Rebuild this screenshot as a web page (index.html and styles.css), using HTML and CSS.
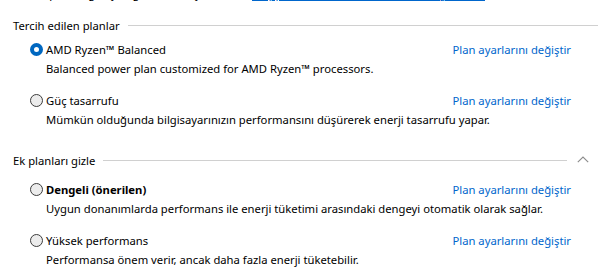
FILE: index.html
```html
<!DOCTYPE html>
<html lang="tr">
<head>
    <meta charset="UTF-8">
    <title>Güç Seçenekleri</title>
    <link rel="stylesheet" href="styles.css">
</head>
<body>
    <div class="page">
        <p class="intro">(ekran parlaklığı, uyku gibi) koleksiyonudur. <a href="#" class="more">Güç planları hakkında daha fazla bilgi edinin</a></p>

        <div class="group">
            <div class="head">
                <span class="title">Tercih edilen planlar</span>
                <span class="rule"></span>
            </div>
            <div class="plan">
                <div class="row">
                    <span class="radio on"></span>
                    <span class="name">AMD Ryzen™ Balanced</span>
                    <a href="#" class="link">Plan ayarlarını değiştir</a>
                </div>
                <div class="desc">Balanced power plan customized for AMD Ryzen™ processors.</div>
            </div>
            <div class="plan">
                <div class="row">
                    <span class="radio"></span>
                    <span class="name">Güç tasarrufu</span>
                    <a href="#" class="link">Plan ayarlarını değiştir</a>
                </div>
                <div class="desc">Mümkün olduğunda bilgisayarınızın performansını düşürerek enerji tasarrufu yapar.</div>
            </div>
        </div>

        <div class="group extra">
            <div class="head">
                <span class="title">Ek planları gizle</span>
                <span class="rule short"></span>
                <svg class="chev" width="12" height="7" viewBox="0 0 12 7"><path d="M0.8 6.2 L6 1 L11.2 6.2" fill="none" stroke="#8c8c8c" stroke-width="1.1"/></svg>
            </div>
            <div class="plan">
                <div class="row">
                    <span class="radio"></span>
                    <span class="name bold">Dengeli (önerilen)</span>
                    <a href="#" class="link">Plan ayarlarını değiştir</a>
                </div>
                <div class="desc">Uygun donanımlarda performans ile enerji tüketimi arasındaki dengeyi otomatik olarak sağlar.</div>
            </div>
            <div class="plan">
                <div class="row">
                    <span class="radio"></span>
                    <span class="name">Yüksek performans</span>
                    <a href="#" class="link">Plan ayarlarını değiştir</a>
                </div>
                <div class="desc">Performansa önem verir, ancak daha fazla enerji tüketebilir.</div>
            </div>
        </div>
    </div>
</body>
</html>
```
FILE: styles.css
```css
*{margin: 0;padding: 0;box-sizing: border-box;}
body{background: #fff;font-family: "Noto Sans", "Liberation Sans", sans-serif;font-size: 11.25px;color: #000;overflow: hidden;}
.page{padding: 0 16px 0 13px;width: 614px;}

.intro{margin-top: -16px;height: 20px;line-height: 20px;white-space: nowrap;overflow: hidden;}
.more{color: #0066cc;margin-left: 8px;text-decoration: underline;text-underline-offset: 2px;}

.group{margin-top: 11px;}
.extra{margin-top: 20px;}
.head{display: flex;align-items: center;height: 20px;}
.title{white-space: nowrap;}
.rule{flex: 1;height: 1px;background: #d0d0d0;margin-left: 8px;margin-top: 1px;}
.rule.short{margin-right: 10px;}
.chev{margin-right: 9px;margin-top: -1px;}

.plan{padding-left: 17px;padding-right: 27px;margin-top: 4px;}
.extra .plan{margin-top: 9px;}
.plan + .plan, .extra .plan + .plan{margin-top: 11px;}
.row{display: flex;align-items: center;height: 20px;}
.radio{width: 13px;height: 13px;border-radius: 50%;border: 1px solid #3c3c3c;background: #ececec;margin-right: 3px;flex: none;}
.radio.on{border: 4px solid #0067c0;background: #fff;}
.name{flex: 1;}
.bold{font-weight: bold;}
.link{color: #0066cc;text-decoration: none;}
.desc{padding-left: 16px;height: 20px;line-height: 20px;white-space: nowrap;}
```
